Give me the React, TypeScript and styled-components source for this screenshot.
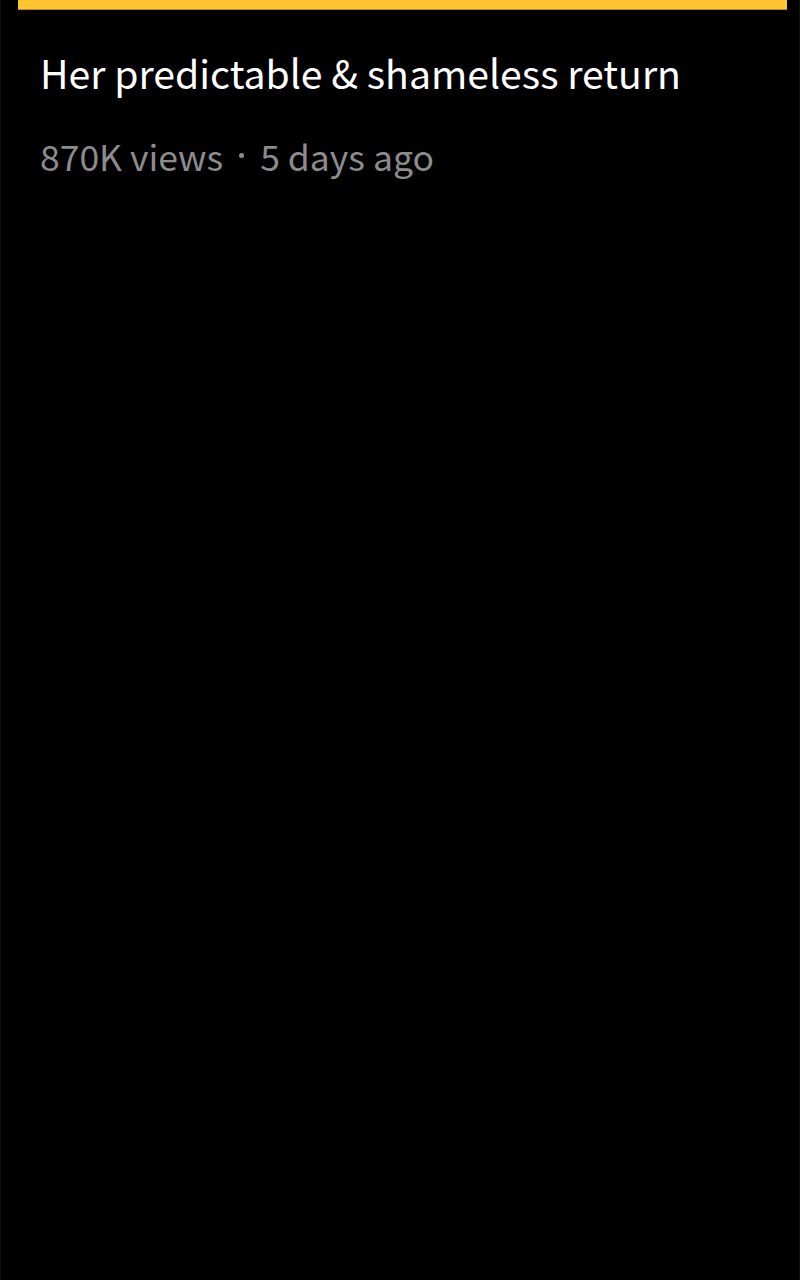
import React from "react";
import styled, { createGlobalStyle } from "styled-components";

const Global = createGlobalStyle`
  html, body { margin: 0; padding: 0; background: #000; }
  body { font-family: "Noto Sans CJK SC", "Noto Sans", sans-serif; }
`;

const Page = styled.div`
  width: 800px;
  height: 1280px;
  box-sizing: border-box;
  background: #000;
  border-left: 1px solid #0f0f0f;
  border-right: 1px solid #0f0f0f;
  display: flex;
  flex-direction: column;
`;

const TopBar = styled.div`
  margin: 0 12px 0 17px;
  height: 10px;
  box-sizing: border-box;
  background: #ffc52f;
  border-bottom: 1px solid #b8861c;
`;

const Info = styled.div`
  display: flex;
  flex-direction: column;
  padding: 0 39px;
`;

const Title = styled.h1`
  margin: 0;
  padding-top: 43px;
  color: #ffffff;
  font-size: 39.2px;
  font-weight: 400;
  line-height: 1;
`;

const Meta = styled.div`
  margin-top: 46px;
  color: #8c8c8c;
  font-size: 35.5px;
  line-height: 1;
  display: flex;
  align-items: center;
  gap: 16px;
`;

const Dot = styled.span`
  width: 5px;
  height: 5px;
  border-radius: 50%;
  background: #8c8c8c;
`;

export default function App() {
  return (
    <>
      <Global />
      <Page>
        <TopBar />
        <Info>
          <Title>Her predictable &amp; shameless return</Title>
          <Meta>
            <span>870K views</span>
            <Dot />
            <span>5 days ago</span>
          </Meta>
        </Info>
      </Page>
    </>
  );
}
